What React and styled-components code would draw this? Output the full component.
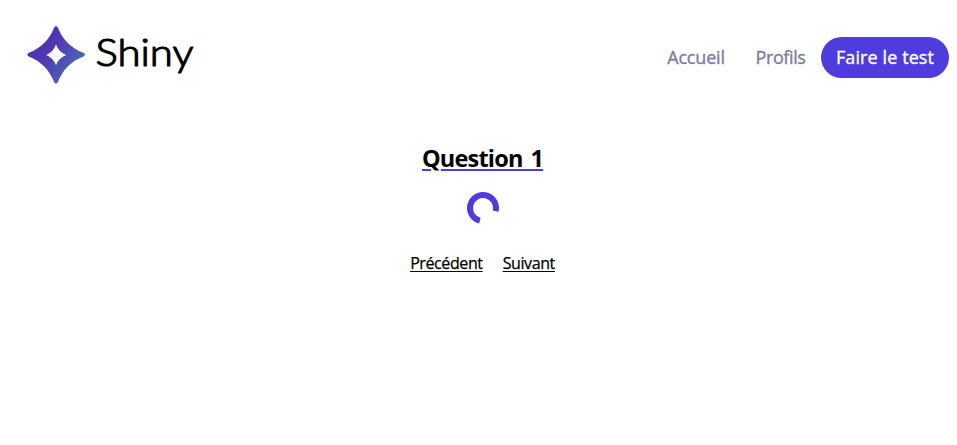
import React from 'react'
import styled, { createGlobalStyle } from 'styled-components'

const GlobalStyle = createGlobalStyle`
  * { box-sizing: border-box; }
  body { margin: 0; background: #ffffff; }
`

const Page = styled.div`
  min-height: 445px;
  font-family: 'Trebuchet MS', 'Open Sans', sans-serif;
  color: #000000;
`

const Header = styled.header`
  height: 110px;
  padding: 0 8px 0 23px;
  display: flex;
  justify-content: space-between;
  align-items: flex-start;
`

const Logo = styled.svg`
  width: 180px;
  height: 70px;
  margin-top: 20px;
  display: block;
`

const LogoText = styled.text`
  font-family: Lato, sans-serif;
  font-size: 38px;
  font-weight: 300;
  stroke: #000000;
  stroke-width: 1.2px;
  stroke-linejoin: round;
`

const Nav = styled.nav`
  display: flex;
  margin-top: 37px;
`

const NavLink = styled.a`
  display: flex;
  align-items: center;
  justify-content: center;
  width: ${({ $width }) => $width}px;
  height: 41px;
  padding-bottom: 1px;
  border-radius: 30px;
  font-size: 18px;
  font-weight: 500;
  -webkit-text-stroke: 0.35px currentColor;
  letter-spacing: ${({ $spacing }) => $spacing}px;
  white-space: nowrap;
  color: ${({ $active }) => ($active ? '#ffffff' : '#7b7d9b')};
  background: ${({ $active }) => ($active ? '#4f3cde' : 'transparent')};
`

const Survey = styled.main`
  display: flex;
  flex-direction: column;
  align-items: center;
  padding: 32px 0 0 8px;
`

const Title = styled.h1`
  margin: 0;
  font-size: 23.5px;
  line-height: 32px;
  font-weight: 700;
  letter-spacing: -0.8px;
  word-spacing: 2.5px;
  white-space: nowrap;
  text-decoration: underline;
  text-decoration-color: #4f3cde;
  text-decoration-thickness: 2px;
  text-underline-offset: 2px;
`

const Loader = styled.svg`
  display: block;
  width: 32px;
  height: 32px;
  margin: 18px 0 28px;
`

const Pager = styled.div`
  display: flex;
  gap: 20px;
`

const PagerLink = styled.a`
  font-size: 16px;
  line-height: 22px;
  -webkit-text-stroke: 0.25px currentColor;
  letter-spacing: ${({ $spacing }) => $spacing}px;
  white-space: nowrap;
  text-decoration: underline;
  text-decoration-thickness: 1px;
  text-underline-offset: 2px;
`

function ShinyLogo() {
  return (
    <Logo viewBox="23 20 180 70" role="img" aria-label="Shiny">
      <defs>
        <linearGradient id="star" x1="36" y1="38" x2="78" y2="70" gradientUnits="userSpaceOnUse">
          <stop offset="0" stopColor="#4f2fb5" />
          <stop offset="0.4" stopColor="#4f3bb3" />
          <stop offset="1" stopColor="#4a6db5" />
        </linearGradient>
      </defs>
      <path
        fill="url(#star)"
        fillRule="evenodd"
        d="M54.2 27.5Q56 24.8 57.8 27.5C62 38.5 71 48.5 83.5 52.8Q86.5 54.8 83.5 56.5C71 61 62 71 57.8 82.3Q56 85.2 54.2 82.3C50 71 41 61 28.7 56.5Q26 54.8 28.7 52.8C41 48.5 50 38.5 54.2 27.5ZM56 44.5Q53.2 52.2 46.2 55Q53.2 57.8 56 65.2Q58.8 57.8 66.2 55Q58.8 52.2 56 44.5Z"
      />
      <LogoText x="95.5" y="65.5" textLength="98" lengthAdjust="spacingAndGlyphs">Shiny</LogoText>
    </Logo>
  )
}

export default function App() {
  return (
    <Page>
      <GlobalStyle />
      <Header>
        <ShinyLogo />
        <Nav>
          <NavLink $width={88} $spacing={-0.2}>Accueil</NavLink>
          <NavLink $width={81} $spacing={-0.4}>Profils</NavLink>
          <NavLink $width={128} $spacing={0.1} $active>Faire le test</NavLink>
        </Nav>
      </Header>
      <Survey>
        <Title>Question 1</Title>
        <Loader viewBox="0 0 32 32">
          <path d="M12.86 28.61A13 13 0 1 1 28.61 19.14" fill="none" stroke="#4f3cde" strokeWidth="6" />
        </Loader>
        <Pager>
          <PagerLink $spacing={-0.4}>Précédent</PagerLink>
          <PagerLink $spacing={-0.4}>Suivant</PagerLink>
        </Pager>
      </Survey>
    </Page>
  )
}
